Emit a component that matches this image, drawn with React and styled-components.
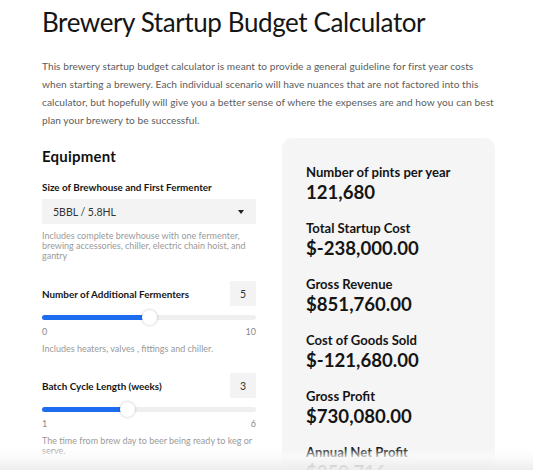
import React from "react";
import styled, { createGlobalStyle } from "styled-components";

const GlobalStyle = createGlobalStyle`
  html, body { margin: 0; padding: 0; background: #fff; }
  body { font-family: Lato, "Liberation Sans", sans-serif; color: #222; }
  * { box-sizing: border-box; }
`;

const Page = styled.main`
  width: 453px;
  margin-left: 42px;
  padding-top: 5px;
`;

const Title = styled.h1`
  margin: 0;
  font-family: Lato, sans-serif;
  font-weight: 400;
  font-size: 26px;
  line-height: 34px;
  color: #151515;
  letter-spacing: -0.4px;
`;

const Intro = styled.p`
  margin: 18px 0 0;
  font-size: 10.15px;
  line-height: 18px;
  color: #5c5c5c;
  letter-spacing: 0.05px;
`;

const Columns = styled.div`
  display: grid;
  grid-template-columns: 214px 213px;
  column-gap: 26px;
  margin-top: 9px;
  align-items: start;
`;

const Left = styled.section`
  padding-top: 8px;
`;

const SectionTitle = styled.h2`
  margin: 0;
  font-size: 15px;
  line-height: 20px;
  font-weight: 700;
  color: #111;
  letter-spacing: 0.2px;
`;

const Field = styled.div`
  margin-top: ${(p) => p.$gap}px;
`;

const FieldLabel = styled.div`
  font-size: 9.9px;
  font-weight: 700;
  line-height: 14px;
  color: #151515;
`;

const LabelRow = styled.div`
  display: flex;
  align-items: center;
  justify-content: space-between;
`;

const Select = styled.div`
  margin-top: 5px;
  height: 25px;
  background: #f3f3f3;
  display: flex;
  align-items: center;
  justify-content: space-between;
  padding: 0 12px 0 11px;
  font-size: 10.5px;
  color: #333;
`;

const Caret = styled.span`
  width: 0;
  height: 0;
  border-left: 3.5px solid transparent;
  border-right: 3.5px solid transparent;
  border-top: 4px solid #222;
`;

const Help = styled.div`
  margin-top: ${(p) => p.$top || 7}px;
  font-size: 9px;
  line-height: 10px;
  color: #9a9a9a;
`;

const ValueBox = styled.div`
  width: 26px;
  height: 25px;
  background: #f3f3f3;
  display: flex;
  align-items: center;
  justify-content: center;
  font-size: 10.5px;
  color: #333;
`;

const Track = styled.div`
  position: relative;
  margin-top: 9px;
  height: 5px;
  border-radius: 3px;
  background: #efefef;
`;

const Fill = styled.div`
  height: 100%;
  border-radius: 3px;
  background: #1d6cf0;
`;

const Thumb = styled.div`
  position: absolute;
  top: 50%;
  width: 15px;
  height: 15px;
  margin-left: -7.5px;
  margin-top: -7.5px;
  border-radius: 50%;
  background: #fff;
  box-shadow: 0 0 3px rgba(0, 0, 0, 0.25);
`;

const Scale = styled.div`
  margin-top: 7px;
  display: flex;
  justify-content: space-between;
  font-size: 9px;
  line-height: 10px;
  color: #888;
`;

const Panel = styled.aside`
  background: #f5f5f5;
  border-radius: 10px;
  padding: 26px 24px 20px;
`;

const Stat = styled.div`
  & + & {
    margin-top: 17px;
  }
`;

const StatLabel = styled.div`
  font-size: 13.1px;
  font-weight: 700;
  line-height: 17px;
  color: #151515;
`;

const StatValue = styled.div`
  font-size: 18.6px;
  font-weight: 700;
  line-height: 22px;
  color: #151515;
`;

const BottomFade = styled.div`
  position: fixed;
  left: 0;
  right: 0;
  bottom: 0;
  height: 22px;
  pointer-events: none;
  background: linear-gradient(
    to bottom,
    rgba(255, 255, 255, 0) 0%,
    rgba(250, 250, 250, 0.75) 40%,
    rgba(236, 236, 236, 0.95) 100%
  );
`;

function Slider({ value, min, max }) {
  const pct = ((value - min) / (max - min)) * 100;
  return (
    <>
      <Track>
        <Fill style={{ width: `${pct}%` }} />
        <Thumb style={{ left: `${pct}%` }} />
      </Track>
      <Scale>
        <span>{min}</span>
        <span>{max}</span>
      </Scale>
    </>
  );
}

const stats = [
  ["Number of pints per year", "121,680"],
  ["Total Startup Cost", "$-238,000.00"],
  ["Gross Revenue", "$851,760.00"],
  ["Cost of Goods Sold", "$-121,680.00"],
  ["Gross Profit", "$730,080.00"],
  ["Annual Net Profit", "$350,716"],
];

export default function App() {
  return (
    <>
      <GlobalStyle />
      <Page>
        <Title>Brewery Startup Budget Calculator</Title>
        <Intro>
          This brewery startup budget calculator is meant to provide a general
          guideline for first year costs when starting a brewery. Each
          individual scenario will have nuances that are not factored into this
          calculator, but hopefully will give you a better sense of where the
          expenses are and how you can best plan your brewery to be successful.
        </Intro>
        <Columns>
          <Left>
            <SectionTitle>Equipment</SectionTitle>
            <Field $gap={14}>
              <FieldLabel>Size of Brewhouse and First Fermenter</FieldLabel>
              <Select>
                <span>5BBL / 5.8HL</span>
                <Caret />
              </Select>
              <Help>
                Includes complete brewhouse with one fermenter, brewing
                accessories, chiller, electric chain hoist, and gantry
              </Help>
            </Field>
            <Field $gap={20}>
              <LabelRow>
                <FieldLabel>Number of Additional Fermenters</FieldLabel>
                <ValueBox>5</ValueBox>
              </LabelRow>
              <Slider value={5} min={0} max={10} />
              <Help $top={7}>Includes heaters, valves , fittings and chiller.</Help>
            </Field>
            <Field $gap={19}>
              <LabelRow>
                <FieldLabel>Batch Cycle Length (weeks)</FieldLabel>
                <ValueBox>3</ValueBox>
              </LabelRow>
              <Slider value={3} min={1} max={6} />
              <Help $top={7}>
                The time from brew day to beer being ready to keg or serve.
              </Help>
            </Field>
          </Left>
          <Panel>
            {stats.map(([label, value]) => (
              <Stat key={label}>
                <StatLabel>{label}</StatLabel>
                <StatValue>{value}</StatValue>
              </Stat>
            ))}
          </Panel>
        </Columns>
      </Page>
      <BottomFade />
    </>
  );
}
